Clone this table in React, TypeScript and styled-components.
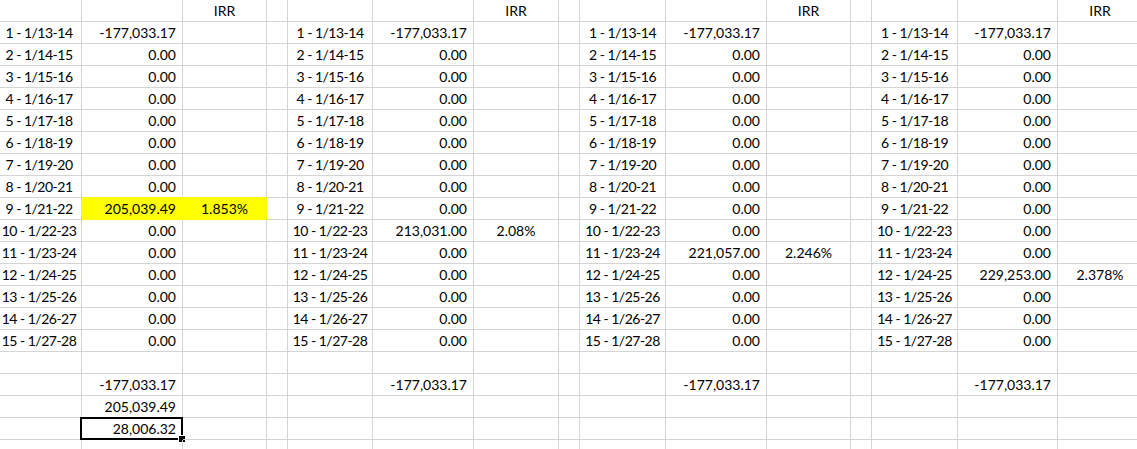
import styled, { createGlobalStyle } from "styled-components";

const COLS = [82, 101, 84, 21, 85, 101, 85, 21, 86, 101, 84, 21, 86, 100, 85];

const GlobalStyle = createGlobalStyle`
    html, body {
        margin: 0;
        padding: 0;
        background: #ffffff;
        overflow: hidden;
    }
`;

const Sheet = styled.div`
    width: ${COLS.reduce((a, b) => a + b, 0)}px;
    font-family: "Lato", "Liberation Sans", sans-serif;
    font-size: 14px;
    color: #000000;
`;

const Row = styled.div`
    display: grid;
    grid-template-columns: ${COLS.map((c) => `${c}px`).join(" ")};
    height: 22px;
`;

type Align = "left" | "center" | "right";

const Cell = styled.div<{ $align?: Align; $fill?: boolean; $first?: boolean }>`
    position: relative;
    box-sizing: border-box;
    height: 22px;
    padding: ${({ $align, $first }) =>
        $first ? "0 3px 0 0" : $align === "right" ? "0 6px 0 0" : "0"};
    border-right: 1px solid ${({ $fill }) => ($fill ? "#ffff00" : "#d4d4d4")};
    border-bottom: 1px solid ${({ $fill }) => ($fill ? "#ffff00" : "#d4d4d4")};
    background: ${({ $fill }) => ($fill ? "#ffff00" : "transparent")};
    box-shadow: ${({ $fill }) => ($fill ? "0 -1px 0 #ffff00" : "none")};
    line-height: 21px;
    text-align: ${({ $align }) => $align ?? "left"};
    white-space: nowrap;
`;

const LabelCell = styled(Cell)`
    letter-spacing: -0.5px;
`;

const Selection = styled.div`
    position: absolute;
    left: -2px;
    top: -1px;
    right: -1px;
    bottom: -1px;
    border: 2px solid #000000;
    pointer-events: none;
`;

const Handle = styled.div`
    position: absolute;
    right: -5px;
    bottom: -5px;
    width: 6px;
    height: 6px;
    background: #000000;
    border: 1px solid #ffffff;
`;

interface BlockData {
    hit: number;
    value: string;
    irr: string;
}

const blocks: BlockData[] = [
    { hit: 9, value: "205,039.49", irr: "1.853%" },
    { hit: 10, value: "213,031.00", irr: "2.08%" },
    { hit: 11, value: "221,057.00", irr: "2.246%" },
    { hit: 12, value: "229,253.00", irr: "2.378%" },
];

const label = (n: number) => `${n} - 1/${12 + n}-${13 + n}`;

const App = () => {
    const rows = Array.from({ length: 15 }, (_, i) => i + 1);

    return (
        <>
            <GlobalStyle />
            <Sheet>
                <Row>
                    {blocks.map((_, b) => [
                        <Cell key={`a${b}`} $first={b === 0} />,
                        <Cell key={`v${b}`} />,
                        <Cell key={`i${b}`} $align="center">IRR</Cell>,
                        b < 3 ? <Cell key={`g${b}`} /> : null,
                    ])}
                </Row>
                {rows.map((n) => (
                    <Row key={n}>
                        {blocks.map((blk, b) => {
                            const isHit = n === blk.hit;
                            const fill = b === 0 && isHit;
                            const value = n === 1 ? "-177,033.17" : isHit ? blk.value : "0.00";
                            return [
                                <LabelCell key={`a${b}`} $align="center" $first={b === 0}>
                                    {label(n)}
                                </LabelCell>,
                                <Cell key={`v${b}`} $align="right" $fill={fill}>
                                    {value}
                                </Cell>,
                                <Cell key={`i${b}`} $align="center" $fill={fill}>
                                    {isHit ? blk.irr : ""}
                                </Cell>,
                                b < 3 ? <Cell key={`g${b}`} /> : null,
                            ];
                        })}
                    </Row>
                ))}
                <Row>
                    {COLS.map((_, c) => (
                        <Cell key={c} />
                    ))}
                </Row>
                <Row>
                    {blocks.map((_, b) => [
                        <Cell key={`a${b}`} />,
                        <Cell key={`v${b}`} $align="right">-177,033.17</Cell>,
                        <Cell key={`i${b}`} />,
                        b < 3 ? <Cell key={`g${b}`} /> : null,
                    ])}
                </Row>
                <Row>
                    {COLS.map((_, c) => (
                        <Cell key={c} $align={c === 1 ? "right" : "left"}>
                            {c === 1 ? "205,039.49" : ""}
                        </Cell>
                    ))}
                </Row>
                <Row>
                    {COLS.map((_, c) => (
                        <Cell key={c} $align={c === 1 ? "right" : "left"}>
                            {c === 1 ? "28,006.32" : ""}
                            {c === 1 && (
                                <Selection>
                                    <Handle />
                                </Selection>
                            )}
                        </Cell>
                    ))}
                </Row>
                <Row>
                    {COLS.map((_, c) => (
                        <Cell key={c} />
                    ))}
                </Row>
            </Sheet>
        </>
    );
};

export default App;
